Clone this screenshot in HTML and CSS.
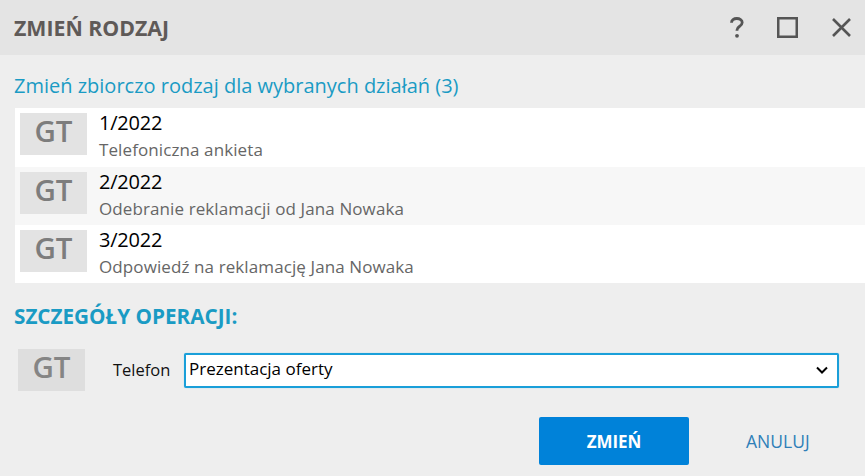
FILE: index.html
```html
<!DOCTYPE html>
<html lang="pl">
<head>
  <meta charset="UTF-8" />
  <title>Zmień rodzaj</title>
  <link rel="stylesheet" href="styles.css">
</head>
<body>
  <div class="dialog">
    <div class="header">
      <div class="title">ZMIEŃ RODZAJ</div>
      <div class="header-icons">
        <svg class="icon-help" width="14" height="21" viewBox="0 0 14 21"><path d="M1.500 5.800c0-2.800 2.300-4.300 5.300-4.300s5.400 1.500 5.400 4c0 2-1.300 3-2.800 4-1.500 1-2.400 1.800-2.400 3.500v.8" fill="none" stroke="#555" stroke-width="2.800"/><circle cx="7" cy="18.800" r="1.900" fill="#555"/></svg>
        <svg width="21" height="21" viewBox="0 0 21 21"><rect x="1.250" y="1.250" width="18.500" height="18.500" fill="none" stroke="#555" stroke-width="2.500"/></svg>
        <svg width="19" height="19" viewBox="0 0 19 19"><path d="M1 1l17 17M18 1l-17 17" fill="none" stroke="#555" stroke-width="2.600"/></svg>
      </div>
    </div>

    <div class="subtitle">Zmień zbiorczo rodzaj dla wybranych działań (3)</div>

    <ul class="items">
      <li class="item">
        <div class="badge">GT</div>
        <div class="item-text">
          <div class="item-num">1/2022</div>
          <div class="item-name">Telefoniczna ankieta</div>
        </div>
      </li>
      <li class="item alt">
        <div class="badge">GT</div>
        <div class="item-text">
          <div class="item-num">2/2022</div>
          <div class="item-name">Odebranie reklamacji od Jana Nowaka</div>
        </div>
      </li>
      <li class="item">
        <div class="badge">GT</div>
        <div class="item-text">
          <div class="item-num">3/2022</div>
          <div class="item-name">Odpowiedź na reklamację Jana Nowaka</div>
        </div>
      </li>
    </ul>

    <div class="section-title">SZCZEGÓŁY OPERACJI:</div>

    <div class="form-row">
      <div class="badge badge-form">GT</div>
      <label class="form-label">Telefon</label>
      <div class="select-box">
        <span class="select-text">Prezentacja oferty</span>
        <svg width="12" height="8" viewBox="0 0 12 8"><path d="M1 1.500l5 5 5-5" fill="none" stroke="#000" stroke-width="2"/></svg>
      </div>
    </div>

    <div class="actions">
      <button class="btn-primary">ZMIEŃ</button>
      <button class="btn-link">ANULUJ</button>
    </div>
  </div>
</body>
</html>
```

FILE: styles.css
```css
* {
  box-sizing: border-box;
}

body {
  margin: 0;
  font-family: "Open Sans", "Noto Sans", sans-serif;
  background-color: #eeeeee;
}

.dialog {
  width: 865px;
  height: 476px;
  overflow: hidden;
}

.header {
  display: flex;
  align-items: center;
  justify-content: space-between;
  height: 55px;
  padding: 0 14px;
  background-color: #e4e4e4;
}

.title {
  font-size: 21.300px;
  font-weight: 700;
  color: #5f5a58;
}

.header-icons {
  display: flex;
  align-items: center;
  gap: 34px;
}

.icon-help {
  margin-right: -1px;
}

.subtitle {
  margin: 19px 0 0 14px;
  height: 34px;
  font-size: 20px;
  line-height: 24px;
  color: #1a9bc4;
}

.items {
  list-style-type: none;
  margin: 0 0 0 15px;
  padding: 0;
}

.item {
  display: flex;
  height: 58px;
  padding: 5px;
  background-color: #ffffff;
}

.item:first-child {
  height: 59px;
}

.item.alt {
  background-color: #f7f7f7;
}

.badge {
  display: flex;
  align-items: center;
  justify-content: center;
  width: 67px;
  height: 42px;
  padding-bottom: 7px;
  font-size: 29.500px;
  font-weight: 600;
  color: #7d7d7d;
  background-color: #e3e3e3;
}

.item-text {
  margin-left: 12px;
}

.item-num {
  font-size: 20px;
  line-height: 24px;
  margin-top: -2px;
  letter-spacing: -0.2px;
  color: #000000;
}

.item-name {
  font-size: 17px;
  line-height: 24px;
  margin-top: 3px;
  letter-spacing: 0.1px;
  color: #666666;
}

.section-title {
  margin: 21px 0 0 14px;
  height: 45px;
  font-size: 20.700px;
  line-height: 24px;
  font-weight: 700;
  color: #1a9bc4;
}

.form-row {
  display: flex;
  align-items: center;
  height: 42px;
  margin-left: 18px;
}

.badge-form {
  background-color: #dedede;
  color: #858585;
}

.form-label {
  margin-left: 28px;
  padding-bottom: 2px;
  width: 71px;
  font-size: 16.500px;
  color: #111111;
}

.select-box {
  display: flex;
  align-items: center;
  justify-content: space-between;
  width: 655px;
  height: 35px;
  padding: 0 9px 0 3px;
  background-color: #ffffff;
  border: 2px solid #1a9fd9;
  border-radius: 2px;
  box-shadow: 0 0 1px #7cc8ea;
  font-size: 17px;
  color: #000000;
}

.select-text {
  padding-bottom: 3px;
}

.actions {
  display: flex;
  align-items: center;
  margin: 26px 0 0 539px;
}

button {
  font-family: inherit;
  border: none;
  cursor: pointer;
}

.btn-primary {
  width: 150px;
  height: 48px;
  background-color: #0082d9;
  border-radius: 2px;
  font-size: 17px;
  font-weight: 700;
  letter-spacing: -0.1px;
  color: #ffffff;
}

.btn-link {
  margin-left: 57px;
  padding: 0;
  background: none;
  font-size: 17.500px;
  color: #2f7fb8;
}
```
